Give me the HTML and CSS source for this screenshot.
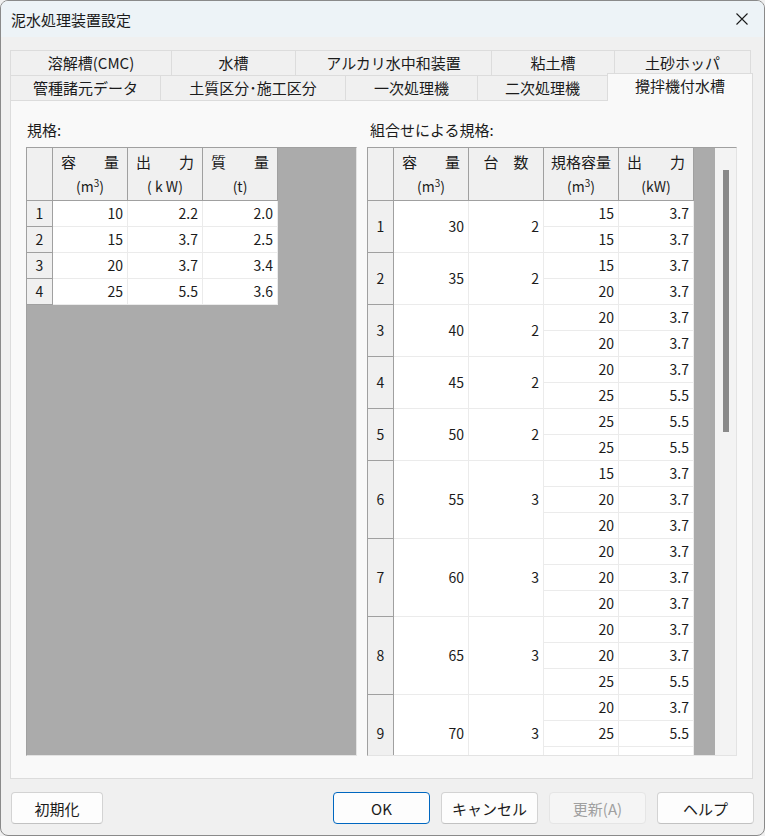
FILE: index.html
```html
<!DOCTYPE html>
<html lang="ja">
<head>
    <meta charset="UTF-8">
    <title>泥水処理装置設定</title>
    <link rel="stylesheet" href="styles.css">
</head>
<body>
<div class="window">

    <div class="titlebar">
        <span class="title">泥水処理装置設定</span>
        <svg class="close" width="12" height="12" viewBox="0 0 12 12">
            <path d="M0.5 0.5 L11.5 11.5 M11.5 0.5 L0.5 11.5" stroke="#1b1b1b" stroke-width="1.1" fill="none"/>
        </svg>
    </div>

    <div class="tabs">
        <div class="tabrow back">
            <div class="tab">溶解槽(CMC)</div>
            <div class="tab">水槽</div>
            <div class="tab">アルカリ水中和装置</div>
            <div class="tab">粘土槽</div>
            <div class="tab">土砂ホッパ</div>
        </div>
        <div class="tabrow front">
            <div class="tab">管種諸元データ</div>
            <div class="tab">土質区分･施工区分</div>
            <div class="tab">一次処理機</div>
            <div class="tab">二次処理機</div>
            <div class="tab active">攪拌機付水槽</div>
        </div>
    </div>

    <div class="panel">
        <!-- 規格 -->
        <div class="col colLeft">
            <div class="label">規格:</div>
            <div class="grid">
                <table class="gt">
                    <colgroup><col class="c-rh"><col class="c-d"><col class="c-d"><col class="c-d"></colgroup>
                    <tr>
                        <th></th>
                        <th><div class="h1"><span>容</span><span>量</span></div><div class="h2">(m<sup>3</sup>)</div></th>
                        <th><div class="h1"><span>出</span><span>力</span></div><div class="h2">( k W)</div></th>
                        <th><div class="h1"><span>質</span><span>量</span></div><div class="h2">(t)</div></th>
                    </tr>
                    <tr><td class="rh">1</td><td>10</td><td>2.2</td><td>2.0</td></tr>
                    <tr><td class="rh">2</td><td>15</td><td>3.7</td><td>2.5</td></tr>
                    <tr><td class="rh">3</td><td>20</td><td>3.7</td><td>3.4</td></tr>
                    <tr><td class="rh">4</td><td>25</td><td>5.5</td><td>3.6</td></tr>
                </table>
            </div>
        </div>

        <!-- 組合せによる規格 -->
        <div class="col colRight">
            <div class="label">組合せによる規格:</div>
            <div class="grid gridRight">
                <div class="tablearea">
                    <table class="gt wide">
                        <colgroup><col class="c-rh"><col class="c-d"><col class="c-d"><col class="c-d"><col class="c-d"></colgroup>
                        <tr>
                            <th></th>
                            <th><div class="h1"><span>容</span><span>量</span></div><div class="h2">(m<sup>3</sup>)</div></th>
                            <th><div class="h1 mid">台　数</div></th>
                            <th><div class="h1 mid">規格容量</div><div class="h2">(m<sup>3</sup>)</div></th>
                            <th><div class="h1"><span>出</span><span>力</span></div><div class="h2">(kW)</div></th>
                        </tr>
                        <tr><td class="rh" rowspan="2">1</td><td rowspan="2">30</td><td rowspan="2">2</td><td>15</td><td>3.7</td></tr>
                        <tr><td>15</td><td>3.7</td></tr>
                        <tr><td class="rh" rowspan="2">2</td><td rowspan="2">35</td><td rowspan="2">2</td><td>15</td><td>3.7</td></tr>
                        <tr><td>20</td><td>3.7</td></tr>
                        <tr><td class="rh" rowspan="2">3</td><td rowspan="2">40</td><td rowspan="2">2</td><td>20</td><td>3.7</td></tr>
                        <tr><td>20</td><td>3.7</td></tr>
                        <tr><td class="rh" rowspan="2">4</td><td rowspan="2">45</td><td rowspan="2">2</td><td>20</td><td>3.7</td></tr>
                        <tr><td>25</td><td>5.5</td></tr>
                        <tr><td class="rh" rowspan="2">5</td><td rowspan="2">50</td><td rowspan="2">2</td><td>25</td><td>5.5</td></tr>
                        <tr><td>25</td><td>5.5</td></tr>
                        <tr><td class="rh" rowspan="3">6</td><td rowspan="3">55</td><td rowspan="3">3</td><td>15</td><td>3.7</td></tr>
                        <tr><td>20</td><td>3.7</td></tr>
                        <tr><td>20</td><td>3.7</td></tr>
                        <tr><td class="rh" rowspan="3">7</td><td rowspan="3">60</td><td rowspan="3">3</td><td>20</td><td>3.7</td></tr>
                        <tr><td>20</td><td>3.7</td></tr>
                        <tr><td>20</td><td>3.7</td></tr>
                        <tr><td class="rh" rowspan="3">8</td><td rowspan="3">65</td><td rowspan="3">3</td><td>20</td><td>3.7</td></tr>
                        <tr><td>20</td><td>3.7</td></tr>
                        <tr><td>25</td><td>5.5</td></tr>
                        <tr><td class="rh" rowspan="3">9</td><td rowspan="3">70</td><td rowspan="3">3</td><td>20</td><td>3.7</td></tr>
                        <tr><td>25</td><td>5.5</td></tr>
                        <tr><td></td><td></td></tr>
                    </table>
                </div>
                <div class="vscroll"><div class="thumb"></div></div>
            </div>
        </div>
    </div>

    <div class="buttons">
        <button class="btn resetBtn" type="button">初期化</button>
        <button class="btn okBtn" type="button">OK</button>
        <button class="btn" type="button">キャンセル</button>
        <button class="btn" type="button" disabled>更新(A)</button>
        <button class="btn" type="button">ヘルプ</button>
    </div>

</div>
</body>
</html>
```

FILE: styles.css
```css
html, body {
    margin: 0;
    padding: 0;
}

body {
    font-family: "Noto Sans CJK JP", sans-serif;
    color: #1b1b1b;
    background-color: #f0f0f0;
}

.window {
    width: 765px;
    height: 836px;
    box-sizing: border-box;
    border: 1px solid #8a8a8a;
    border-radius: 8px;
    background-color: #f0f0f0;
    overflow: hidden;
}

/* title bar */
.titlebar {
    height: 36px;
    background-color: #edf3f7;
    display: flex;
    align-items: center;
    justify-content: space-between;
    padding: 0 16px 0 10px;
}

.title {
    font-size: 15px;
}

/* tabs */
.tabs {
    margin-top: 13px;
    padding-left: 9px;
}

.tabrow {
    display: flex;
    height: 25px;
}

.tab {
    box-sizing: border-box;
    border-top: 1px solid #dcdcdc;
    border-left: 1px solid #dcdcdc;
    background-color: #f0f0f0;
    font-size: 15px;
    line-height: 24px;
    text-align: center;
    white-space: nowrap;
}

.tab:last-child {
    border-right: 1px solid #dcdcdc;
}

.back .tab:nth-child(1) { width: 161px; }
.back .tab:nth-child(2) { width: 124px; }
.back .tab:nth-child(3) { width: 196px; }
.back .tab:nth-child(4) { width: 123px; }
.back .tab:nth-child(5) { width: 137px; }

.front .tab:nth-child(1) { width: 150px; }
.front .tab:nth-child(2) { width: 185px; }
.front .tab:nth-child(3) { width: 132px; }
.front .tab:nth-child(4) { width: 130px; }
.front .tab:nth-child(5) { width: 146px; }

.tab.active {
    position: relative;
    margin-top: -2px;
    margin-bottom: -1px;
    background-color: #f9f9f9;
}

/* panel */
.panel {
    margin-left: 9px;
    width: 743px;
    height: 679px;
    box-sizing: border-box;
    border: 1px solid #dcdcdc;
    background-color: #f9f9f9;
    padding: 18px 15px 22px 15px;
    display: flex;
    gap: 10px;
}

.colLeft { width: 331px; }
.colRight { width: 370px; }

.label {
    font-size: 15px;
    height: 22px;
    line-height: 22px;
    margin-bottom: 6px;
    padding-left: 1px;
}

.colRight .label {
    padding-left: 3px;
}

.grid {
    height: 609px;
    box-sizing: border-box;
    border: 1px solid;
    border-color: #a0a0a0 #e3e3e3 #e3e3e3 #a0a0a0;
    background-color: #ababab;
    overflow: hidden;
}

.gridRight {
    display: flex;
}

.tablearea {
    width: 347px;
    height: 100%;
    overflow: hidden;
}

.vscroll {
    width: 21px;
    height: 100%;
    background-color: #f3f3f3;
}

.thumb {
    width: 6px;
    height: 262px;
    margin: 22px 0 0 8px;
    background-color: #8a8a8a;
}

/* grid tables */
.gt {
    border-collapse: separate;
    border-spacing: 0;
    table-layout: fixed;
    width: 251px;
    font-size: 14px;
}

.gt.wide {
    width: 326px;
}

.c-rh { width: 26px; }
.c-d { width: 75px; }

.gt th {
    height: 52px;
    padding: 0;
    vertical-align: top;
    font-weight: normal;
    background-color: #f0f0f0;
    border-right: 1px solid #a0a0a0;
    border-bottom: 1px solid #a0a0a0;
}

.h1 {
    display: flex;
    justify-content: space-between;
    padding: 0 8px;
    height: 26px;
    line-height: 27px;
    font-size: 15px;
}

.h1.mid {
    justify-content: center;
    padding: 0;
}

.h2 {
    height: 26px;
    line-height: 25px;
    text-align: center;
}

sup {
    font-size: 10px;
    line-height: 0;
    vertical-align: 5px;
}

.gt td {
    height: 25px;
    padding: 0 4px 0 0;
    line-height: 25px;
    text-align: right;
    vertical-align: middle;
    background-color: #ffffff;
    border-right: 1px solid #ebebeb;
    border-bottom: 1px solid #ebebeb;
    white-space: nowrap;
}

.gt td.rh {
    padding: 0;
    text-align: center;
    background-color: #f0f0f0;
    border-right: 1px solid #a0a0a0;
    border-bottom: 1px solid #a0a0a0;
}

/* buttons */
.buttons {
    margin-top: 13px;
    padding: 0 10px;
    display: flex;
    gap: 11px;
}

.btn {
    width: 97px;
    height: 32px;
    box-sizing: border-box;
    font-family: "Noto Sans CJK JP", sans-serif;
    font-size: 15px;
    color: #1b1b1b;
    background-color: #fdfdfd;
    border: 1px solid #d3d3d3;
    border-bottom-color: #c2c2c2;
    border-radius: 4px;
    padding: 0;
}

.resetBtn {
    width: 92px;
    margin-right: auto;
}

.okBtn {
    border-color: #0067c0;
}

.btn:disabled {
    color: #a0a0a0;
    background-color: #f5f5f5;
    border-color: #e5e5e5;
}
```
